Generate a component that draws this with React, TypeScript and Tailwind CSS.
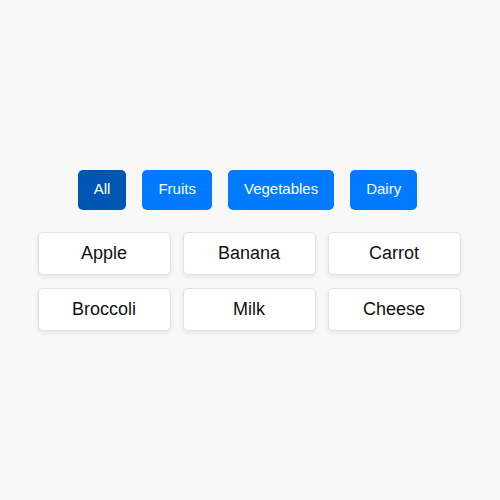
import { useState } from "react";

const FILTERS = ["All", "Fruits", "Vegetables", "Dairy"];

const ITEMS = [
  { name: "Apple", type: "Fruits" },
  { name: "Banana", type: "Fruits" },
  { name: "Carrot", type: "Vegetables" },
  { name: "Broccoli", type: "Vegetables" },
  { name: "Milk", type: "Dairy" },
  { name: "Cheese", type: "Dairy" },
];

export default function App() {
  const [active, setActive] = useState("All");
  const visible = ITEMS.filter((item) => active === "All" || item.type === active);

  return (
    <div
      className="flex min-h-[500px] flex-col items-center justify-center bg-[#f8f8f8]"
      style={{ fontFamily: '"Liberation Sans", Arial, sans-serif' }}
    >
      <div className="mr-[5px] flex items-center gap-4">
        {FILTERS.map((filter) => (
          <button
            key={filter}
            onClick={() => setActive(filter)}
            className={
              filter === active
                ? "h-[40px] rounded-[5px] bg-[#0056b3] px-4 text-[15px] text-white"
                : "h-[40px] rounded-[5px] bg-[#007bff] px-4 text-[15px] text-white"
            }
          >
            {filter}
          </button>
        ))}
      </div>

      <div className="mr-[2px] mt-[22px] grid w-[423px] grid-cols-3 gap-x-[12px] gap-y-[13px]">
        {visible.map((item) => (
          <div
            key={item.name}
            className="flex h-[43px] items-center justify-center rounded-[5px] border border-[#e2e2e2] bg-white text-[18px] text-[#111] shadow-[0_2px_4px_rgba(0,0,0,0.08)]"
          >
            {item.name}
          </div>
        ))}
      </div>
    </div>
  );
}
